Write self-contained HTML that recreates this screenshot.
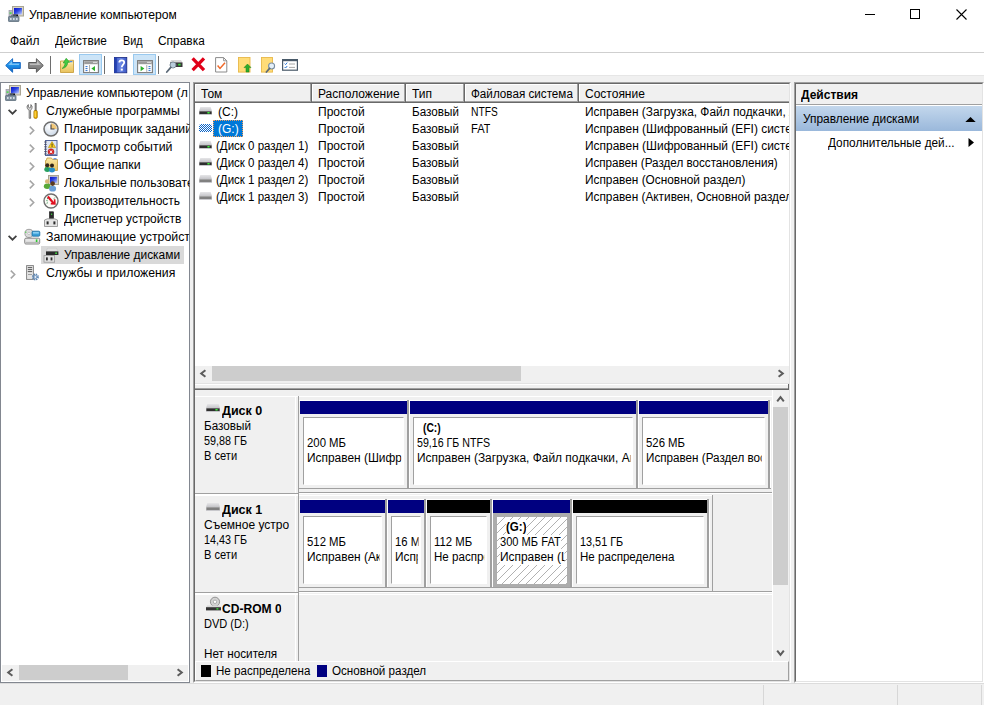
<!DOCTYPE html>
<html><head><meta charset="utf-8"><title>Управление компьютером</title>
<style>
*{box-sizing:border-box;margin:0;padding:0}
html,body{width:984px;height:705px;overflow:hidden;background:#f0f0f0}
body{font-family:"Liberation Sans",sans-serif;font-size:12px;color:#000;position:relative}
.a{position:absolute}
.t{position:absolute;white-space:nowrap;line-height:14px;height:14px;overflow:hidden;transform-origin:0 0}
.b{font-weight:bold}
svg{position:absolute;overflow:visible}
</style></head><body>
<svg width="0" height="0" style="left:0;top:0"><defs>
<linearGradient id="gScr" x1="0" y1="0" x2="1" y2="1"><stop offset="0" stop-color="#0a10c8"/><stop offset="0.45" stop-color="#2a44e0"/><stop offset="1" stop-color="#c8d4ff"/></linearGradient>
<linearGradient id="gBlue" x1="0" y1="0" x2="0" y2="1"><stop offset="0" stop-color="#5bc0ff"/><stop offset="0.5" stop-color="#1b8fe8"/><stop offset="1" stop-color="#0b63c0"/></linearGradient>
<linearGradient id="gGray" x1="0" y1="0" x2="0" y2="1"><stop offset="0" stop-color="#b8b8b8"/><stop offset="0.5" stop-color="#8a8a8a"/><stop offset="1" stop-color="#6e6e6e"/></linearGradient>
<linearGradient id="gHelp" x1="0" y1="0" x2="1" y2="0"><stop offset="0" stop-color="#3350c0"/><stop offset="0.5" stop-color="#6a86e4"/><stop offset="1" stop-color="#3a56c4"/></linearGradient>
<linearGradient id="gDrvTop" x1="0" y1="0" x2="0" y2="1"><stop offset="0" stop-color="#e6e6e8"/><stop offset="1" stop-color="#c2c2c6"/></linearGradient>
<linearGradient id="gFold" x1="0" y1="0" x2="0" y2="1"><stop offset="0" stop-color="#fbe9a8"/><stop offset="1" stop-color="#e9c25c"/></linearGradient>
<radialGradient id="gClock" cx="0.4" cy="0.35" r="0.7"><stop offset="0" stop-color="#ffffff"/><stop offset="1" stop-color="#c9d6e6"/></radialGradient>
<pattern id="hatch" width="8" height="8" patternUnits="userSpaceOnUse"><path d="M-1 1 L1 -1 M-1 9 L9 -1 M7 9 L9 7" stroke="#a8a8a8" stroke-width="0.9" fill="none"/></pattern>
<pattern id="dith" width="2" height="2" patternUnits="userSpaceOnUse"><rect width="2" height="2" fill="#fff"/><rect x="0" y="0" width="1" height="1" fill="#0a64c8"/><rect x="1" y="1" width="1" height="1" fill="#0a64c8"/></pattern>
</defs></svg>
<div class="a" style="left:0px;top:0px;width:984px;height:52px;background:#fff;"></div>
<svg style="left:8px;top:6px" width="16" height="16" viewBox="0 0 16 16"><rect x="4.5" y="0.5" width="11" height="9.5" fill="#d8d4c4" stroke="#a8a494"/>
<rect x="6" y="2" width="8" height="6.5" fill="url(#gScr)"/>
<rect x="1" y="4.5" width="3.5" height="6" fill="#b9b9c4" stroke="#8c8c98" stroke-width="0.6"/>
<rect x="1.6" y="6.4" width="2" height="1.4" fill="#40e040"/>
<path d="M5 8.5 h5 v2 h-5z" fill="#101018"/>
<rect x="0.5" y="10.5" width="10.5" height="5" rx="0.6" fill="#7f909f" stroke="#5e6e7c" stroke-width="0.8"/>
<rect x="2" y="12.2" width="1.6" height="1.6" fill="#e8eef4"/><rect x="5" y="12.2" width="1.6" height="1.6" fill="#e8eef4"/><rect x="8" y="12.2" width="1.6" height="1.6" fill="#e8eef4"/>
<path d="M3.5 10.5 v-1.2 h4.5 v1.2" fill="none" stroke="#5e6e7c" stroke-width="0.9"/></svg>
<div class="t " style="left:29px;top:8px;transform:scaleX(1.0167);">Управление компьютером</div>
<div class="a" style="left:865px;top:14px;width:10px;height:1px;background:#000;"></div>
<div class="a" style="left:910px;top:9px;width:10px;height:10px;background:transparent;border:1px solid #000;"></div>
<svg style="left:956px;top:9px" width="11" height="11"><path d="M0.5 0.5 L10.5 10.5 M10.5 0.5 L0.5 10.5" stroke="#000" stroke-width="1.1"/></svg>
<div class="t " style="left:10px;top:34px;">Файл</div>
<div class="t " style="left:55px;top:34px;transform:scaleX(0.982);">Действие</div>
<div class="t " style="left:122.5px;top:34px;transform:scaleX(0.9075);">Вид</div>
<div class="t " style="left:158px;top:34px;transform:scaleX(0.9934);">Справка</div>
<div class="a" style="left:0px;top:52px;width:984px;height:1px;background:#cfcfcf;"></div>
<div class="a" style="left:0px;top:53px;width:984px;height:22px;background:#fff;"></div>
<div class="a" style="left:0px;top:75px;width:984px;height:1px;background:#e6e6e6;"></div>
<div class="a" style="left:79px;top:54px;width:23px;height:21px;background:#cce4f7;border:1px solid #99c9ef;"></div>
<div class="a" style="left:133px;top:54px;width:23px;height:21px;background:#cce4f7;border:1px solid #99c9ef;"></div>
<div class="a" style="left:50px;top:56px;width:1px;height:18px;background:#6e6e6e;"></div>
<div class="a" style="left:104px;top:56px;width:1px;height:18px;background:#6e6e6e;"></div>
<div class="a" style="left:158px;top:56px;width:1px;height:18px;background:#6e6e6e;"></div>
<svg style="left:5px;top:58px" width="16" height="15" viewBox="0 0 16 15"><path d="M7.6 0.7 L0.7 7.5 L7.6 14.3 V10.5 H15.3 V4.5 H7.6 Z" fill="url(#gBlue)" stroke="#1767c2" stroke-width="1" stroke-linejoin="round"/><path d="M3.2 7 L7 3.6 V5.8 H14 V7 Z" fill="#bfe6ff" opacity="0.55"/></svg>
<svg style="left:28px;top:58px" width="16" height="15" viewBox="0 0 16 15"><path d="M8.4 0.7 L15.3 7.5 L8.4 14.3 V10.5 H0.7 V4.5 H8.4 Z" fill="url(#gGray)" stroke="#5a5a5a" stroke-width="1" stroke-linejoin="round"/><path d="M12.8 7 L9 3.6 V5.8 H2 V7 Z" fill="#e8e8e8" opacity="0.5"/></svg>
<svg style="left:60px;top:58px" width="14" height="15" viewBox="0 0 14 15"><path d="M0.5 3 H9 L9.8 2.3 H13.5 V14.5 H0.5 Z" fill="url(#gFold)" stroke="#c9a040" stroke-width="0.9"/>
<rect x="0.9" y="4.6" width="12.2" height="0.8" fill="#fff4c8" opacity="0.8"/>
<rect x="10" y="3" width="2.4" height="1.2" fill="#4a8ae0"/>
<path d="M2.2 10.4 C4 9.2 5 7.2 5 4.8 L3.2 5 L6.2 0.3 L9.8 4.2 L7.6 4.4 C7.6 7.8 5.4 10 2.2 10.4 Z" fill="#44cc44" stroke="#1e961e" stroke-width="0.6"/></svg>
<svg style="left:83px;top:60px" width="16" height="13" viewBox="0 0 16 13"><rect x="0.6" y="0.6" width="14.8" height="12" fill="#fff" stroke="#7a7a7a" stroke-width="1.1"/>
<rect x="1.2" y="1.2" width="13.6" height="3" fill="#9c9c9c"/>
<rect x="10.4" y="1.8" width="1.2" height="1.2" fill="#fff"/><rect x="12.4" y="1.8" width="1.2" height="1.2" fill="#fff"/><path d="M2.5 6.6 h2 M2.5 8.6 h2 M2.5 10.6 h2" stroke="#2a70d0" stroke-width="1"/>
<rect x="6" y="5" width="0.8" height="7.5" fill="#9a9a9a"/>
<path d="M12 6 L8.4 8.6 L12 11.2 Z" fill="#2cb02c"/></svg>
<svg style="left:114px;top:57px" width="14" height="16" viewBox="0 0 14 16"><rect x="0.4" y="0.4" width="12.4" height="15.4" fill="url(#gHelp)" stroke="#1a2a80" stroke-width="0.8"/>
<rect x="0.4" y="0.4" width="2.4" height="15.4" fill="#2440b0"/>
<path d="M5.3 5.4 C5.3 2.6 10.2 2.6 10.2 5.4 C10.2 7.4 7.8 7.8 7.8 10.2" fill="none" stroke="#fff" stroke-width="1.8"/>
<rect x="6.8" y="11.6" width="2" height="2" fill="#fff"/></svg>
<svg style="left:137px;top:60px" width="16" height="13" viewBox="0 0 16 13"><rect x="0.6" y="0.6" width="14.8" height="12" fill="#fff" stroke="#7a7a7a" stroke-width="1.1"/>
<rect x="1.2" y="1.2" width="13.6" height="3" fill="#9c9c9c"/>
<rect x="10.4" y="1.8" width="1.2" height="1.2" fill="#fff"/><rect x="12.4" y="1.8" width="1.2" height="1.2" fill="#fff"/><path d="M11.5 6.6 h2 M11.5 8.6 h2 M11.5 10.6 h2" stroke="#2a70d0" stroke-width="1"/>
<rect x="9.4" y="5" width="0.8" height="7.5" fill="#9a9a9a"/>
<path d="M3.6 6 L7.4 8.6 L3.6 11.2 Z" fill="#2cb02c"/></svg>
<svg style="left:166px;top:59px" width="17" height="14" viewBox="0 0 17 14"><path d="M5 1 H15 L16.5 3.4 H4 Z" fill="#d8d8d8"/>
<rect x="4" y="3.4" width="12.5" height="4.6" fill="#3a3a3a"/>
<rect x="12.2" y="4.8" width="2.4" height="1.7" fill="#38e038"/>
<circle cx="7" cy="6" r="3" fill="#cfe6f8" fill-opacity="0.85" stroke="#7a8894" stroke-width="1"/>
<path d="M4.8 8.4 L0.8 13" stroke="#5c6a78" stroke-width="1.8" stroke-linecap="round"/></svg>
<svg style="left:191px;top:57px" width="15" height="15" viewBox="0 0 15 15"><path d="M1.6 1.4 L13 13.2 M13 1.4 L1.6 13.2" stroke="#e00018" stroke-width="3.3"/></svg>
<svg style="left:215px;top:57px" width="13" height="16" viewBox="0 0 13 16"><path d="M0.6 0.6 H8.6 L11.8 3.8 V15 H0.6 Z" fill="#fff" stroke="#8a8a8a" stroke-width="1"/>
<path d="M8.6 0.6 V3.8 H11.8" fill="none" stroke="#8a8a8a" stroke-width="0.9"/>
<path d="M2.6 8.6 L5 11.4 L10 5.8" fill="none" stroke="#f06828" stroke-width="1.5"/></svg>
<svg style="left:238px;top:57px" width="14" height="16" viewBox="0 0 14 16"><rect x="0.5" y="0.5" width="11.5" height="14.6" fill="#ffdc78" stroke="#e8b848" stroke-width="0.9"/>
<path d="M9.5 7 L13 10.6 H11 V15 H8 V10.6 H6 Z" fill="#2cac2c" stroke="#1a801a" stroke-width="0.5"/></svg>
<svg style="left:261px;top:57px" width="15" height="16" viewBox="0 0 15 16"><rect x="0.5" y="0.5" width="11" height="14.6" fill="#ffdc78" stroke="#e8b848" stroke-width="0.9"/>
<circle cx="10.6" cy="9" r="3" fill="#e4f0fa" stroke="#7a8ea2" stroke-width="1.1"/>
<path d="M8.6 11.4 L5.4 15" stroke="#5c6a78" stroke-width="1.7" stroke-linecap="round"/></svg>
<svg style="left:282px;top:59px" width="16" height="12" viewBox="0 0 16 12"><rect x="0.6" y="0.6" width="14.8" height="10.6" fill="#fff" stroke="#4a5a6a" stroke-width="1.2"/>
<rect x="0.6" y="0.6" width="14.8" height="1.6" fill="#4a5a6a"/>
<path d="M2.6 4.6 l1 1 l1.6 -2 M2.6 8 l1 1 l1.6 -2" fill="none" stroke="#2a78d8" stroke-width="1"/>
<path d="M7 5 h6 M7 8.4 h6" stroke="#a8a8a8" stroke-width="1"/></svg>
<div class="a" style="left:0px;top:82px;width:190px;height:601px;background:#fff;border:1px solid #828790;"></div>
<svg style="left:5px;top:85px" width="16" height="16" viewBox="0 0 16 16"><rect x="4.5" y="0.5" width="11" height="9.5" fill="#d8d4c4" stroke="#a8a494"/>
<rect x="6" y="2" width="8" height="6.5" fill="url(#gScr)"/>
<rect x="1" y="4.5" width="3.5" height="6" fill="#b9b9c4" stroke="#8c8c98" stroke-width="0.6"/>
<rect x="1.6" y="6.4" width="2" height="1.4" fill="#40e040"/>
<path d="M5 8.5 h5 v2 h-5z" fill="#101018"/>
<rect x="0.5" y="10.5" width="10.5" height="5" rx="0.6" fill="#7f909f" stroke="#5e6e7c" stroke-width="0.8"/>
<rect x="2" y="12.2" width="1.6" height="1.6" fill="#e8eef4"/><rect x="5" y="12.2" width="1.6" height="1.6" fill="#e8eef4"/><rect x="8" y="12.2" width="1.6" height="1.6" fill="#e8eef4"/>
<path d="M3.5 10.5 v-1.2 h4.5 v1.2" fill="none" stroke="#5e6e7c" stroke-width="0.9"/></svg>
<div class="t " style="left:26px;top:86px;width:161.1px;transform:scaleX(1.012);">Управление компьютером (л</div>
<svg style="left:8px;top:109px" width="9" height="6" viewBox="0 0 9 6"><path d="M0.6 0.8 L4.5 4.7 L8.4 0.8" fill="none" stroke="#404040" stroke-width="1.7"/></svg>
<svg style="left:25.5px;top:103px" width="16" height="16" viewBox="0 0 16 16"><path d="M3.2 15.3 V7.2 C1.6 6.6 0.9 5 1.2 3.2 L2.3 1.6 V4 L3.6 4.8 L4.9 4 V1.6 L6 3.2 C6.3 5 5.6 6.6 4.6 7.2 V15.3 Z" fill="#d4d4d4" stroke="#6a6a6a" stroke-width="0.9"/>
<rect x="9" y="0.5" width="1.2" height="7.5" fill="#8a8a8a" stroke="#505050" stroke-width="0.5"/>
<rect x="7.9" y="7.4" width="3.4" height="8" rx="1.3" fill="#f0b400" stroke="#9a6c00" stroke-width="0.7"/>
<rect x="8.7" y="8.4" width="0.9" height="5.6" fill="#ffe070"/></svg>
<div class="t " style="left:45.5px;top:104px;width:140.8px;transform:scaleX(1.0191);">Служебные программы</div>
<svg style="left:29px;top:125.5px" width="6" height="9" viewBox="0 0 6 9"><path d="M0.8 0.6 L4.7 4.5 L0.8 8.4" fill="none" stroke="#a6a6a6" stroke-width="1.6"/></svg>
<svg style="left:43px;top:121px" width="16" height="16" viewBox="0 0 16 16"><circle cx="8" cy="8" r="7" fill="url(#gClock)" stroke="#6e6e6e" stroke-width="1.5"/>
<path d="M8 8 V2.2 A5.8 5.8 0 0 1 13.8 8 Z" fill="#f2c878"/>
<path d="M8 3.5 V8 H11.5" fill="none" stroke="#404048" stroke-width="1.1"/></svg>
<div class="t " style="left:64px;top:122px;width:123.5px;transform:scaleX(1.012);">Планировщик заданий</div>
<svg style="left:29px;top:143.5px" width="6" height="9" viewBox="0 0 6 9"><path d="M0.8 0.6 L4.7 4.5 L0.8 8.4" fill="none" stroke="#a6a6a6" stroke-width="1.6"/></svg>
<svg style="left:43px;top:140px" width="16" height="16" viewBox="0 0 16 16"><rect x="2.5" y="0.5" width="11.5" height="15" fill="#dfe6f4" stroke="#54669c"/>
<path d="M1.2 2 h2.6 M1.2 4.4 h2.6 M1.2 6.8 h2.6 M1.2 9.2 h2.6 M1.2 11.6 h2.6 M1.2 14 h2.6" stroke="#4a4a5a" stroke-width="0.9"/>
<path d="M9 1.6 L12.6 7.6 H5.4 Z" fill="#ffd21c" stroke="#b08800" stroke-width="0.6"/>
<rect x="8.6" y="3.6" width="0.9" height="2.2" fill="#202020"/><rect x="8.6" y="6.2" width="0.9" height="0.8" fill="#202020"/>
<circle cx="8" cy="11.8" r="3" fill="#e02828" stroke="#9c1010" stroke-width="0.5"/>
<path d="M6.7 10.5 L9.3 13.1 M9.3 10.5 L6.7 13.1" stroke="#fff" stroke-width="1"/>
<rect x="4" y="14" width="9.5" height="1" fill="#54669c" opacity="0.7"/></svg>
<div class="t " style="left:64px;top:140px;width:121.4px;transform:scaleX(1.0296);">Просмотр событий</div>
<svg style="left:29px;top:161.5px" width="6" height="9" viewBox="0 0 6 9"><path d="M0.8 0.6 L4.7 4.5 L0.8 8.4" fill="none" stroke="#a6a6a6" stroke-width="1.6"/></svg>
<svg style="left:43px;top:157px" width="16" height="16" viewBox="0 0 16 16"><path d="M2.5 3.5 V13.5 H14.5 V2.5 H9.5 L8.5 1 H4 L3.3 3.5 Z" fill="url(#gFold)" stroke="#c39a3c" stroke-width="0.8"/>
<rect x="10.5" y="1.2" width="3" height="1.2" fill="#4e86d8"/><ellipse cx="4.3" cy="12.569999999999999" rx="3.04" ry="2.4699999999999998" fill="#28a060"/><circle cx="4.3" cy="8.2" r="1.9949999999999999" fill="#3a2a1c"/><ellipse cx="9" cy="12.969999999999999" rx="3.04" ry="2.4699999999999998" fill="#2890c8"/><circle cx="9" cy="8.6" r="1.9949999999999999" fill="#2e2218"/></svg>
<div class="t " style="left:64px;top:158px;width:121.4px;transform:scaleX(1.0294);">Общие папки</div>
<svg style="left:29px;top:179.5px" width="6" height="9" viewBox="0 0 6 9"><path d="M0.8 0.6 L4.7 4.5 L0.8 8.4" fill="none" stroke="#a6a6a6" stroke-width="1.6"/></svg>
<svg style="left:43px;top:175px" width="16" height="16" viewBox="0 0 16 16"><rect x="5.5" y="0.5" width="10" height="9" fill="#d8d4c4" stroke="#a8a494"/>
<rect x="7" y="1.8" width="7.2" height="6.2" fill="url(#gScr)"/><ellipse cx="4.2" cy="11.23" rx="3.3600000000000003" ry="2.7300000000000004" fill="#58a838"/><circle cx="4.2" cy="6.4" r="2.205" fill="#d8b878"/><ellipse cx="9.6" cy="13.66" rx="3.5200000000000005" ry="2.8600000000000003" fill="#6aa0d8"/><circle cx="9.6" cy="8.6" r="2.3100000000000005" fill="#5a3a20"/></svg>
<div class="t " style="left:64px;top:176px;width:123.5px;transform:scaleX(1.012);">Локальные пользователи</div>
<svg style="left:29px;top:197.5px" width="6" height="9" viewBox="0 0 6 9"><path d="M0.8 0.6 L4.7 4.5 L0.8 8.4" fill="none" stroke="#a6a6a6" stroke-width="1.6"/></svg>
<svg style="left:43px;top:193px" width="16" height="16" viewBox="0 0 16 16"><circle cx="8" cy="8" r="7" fill="#fbfbf6" stroke="#6e6e6e" stroke-width="1.4"/>
<path d="M4 5.2 L5 6 M3.4 7.6 L4.6 7.8 M3.6 10.2 L4.8 9.8 M11.8 4.6 L11 5.6" stroke="#2a8a4a" stroke-width="0.9"/>
<path d="M4.8 3.6 L10.6 10.2" stroke="#e01020" stroke-width="2.2"/>
<path d="M11.6 6.2 L11.9 10.8 L7.8 10.6" fill="none" stroke="#e01020" stroke-width="1.6"/></svg>
<div class="t " style="left:64px;top:194px;width:125.5px;transform:scaleX(0.9957);">Производительность</div>
<svg style="left:43px;top:211px" width="16" height="16" viewBox="0 0 16 16"><rect x="6.5" y="0.8" width="4" height="7.2" fill="#2a2a2a" stroke="#101010" stroke-width="0.6"/>
<rect x="8" y="2.6" width="1.2" height="1.2" fill="#40e040"/>
<path d="M1.5 15.5 V9 L4.5 7.8 H11.5 L14.5 9 V15.5 Z" fill="#e4e4e4" stroke="#8a8a8a" stroke-width="0.8"/>
<rect x="3.6" y="10.4" width="2" height="3" fill="#2c2c2c"/><rect x="10.4" y="10.4" width="2" height="3" fill="#2c2c2c"/></svg>
<div class="t " style="left:64px;top:212px;width:125.4px;">Диспетчер устройств</div>
<svg style="left:8px;top:235px" width="9" height="6" viewBox="0 0 9 6"><path d="M0.6 0.8 L4.5 4.7 L8.4 0.8" fill="none" stroke="#404040" stroke-width="1.7"/></svg>
<svg style="left:24px;top:229px" width="16" height="16" viewBox="0 0 16 16"><circle cx="5" cy="4.4" r="4.1" fill="#dcdcdc" stroke="#8e8e8e" stroke-width="0.8"/>
<circle cx="5" cy="4.4" r="1.2" fill="#fff" stroke="#9a9a9a" stroke-width="0.5"/>
<rect x="1.2" y="2.6" width="1.2" height="1.2" fill="#40d040"/>
<rect x="8" y="2.2" width="7.8" height="5" rx="1" fill="#3aa0d8" stroke="#1c6ca0" stroke-width="0.8"/>
<rect x="9" y="3" width="5.8" height="1.6" fill="#8ad0f4"/>
<rect x="0.7" y="9.2" width="15" height="5.8" rx="1.2" fill="#e6e6e6" stroke="#7a7a7a" stroke-width="0.9"/>
<rect x="1.4" y="12.8" width="13.6" height="1.6" fill="#b8b8b8"/>
<rect x="11.8" y="10.4" width="1.6" height="2.6" fill="#30c830"/></svg>
<div class="t " style="left:45.5px;top:230px;width:139.3px;transform:scaleX(1.03);">Запоминающие устройства</div>
<div class="a" style="left:41px;top:246px;width:143px;height:18px;background:#d9d9d9;"></div>
<svg style="left:43px;top:247px" width="16" height="16" viewBox="0 0 16 16"><path d="M4.5 1.2 H13.5 L15 4.4 H3 Z" fill="#e0e0e0" stroke="#c0c0c0" stroke-width="0.5"/>
<rect x="3" y="4.4" width="12.4" height="3.6" fill="#2b2b2b"/>
<rect x="12.2" y="5.5" width="1.8" height="1.4" fill="#40e040"/>
<rect x="1" y="8.6" width="10.6" height="6.6" fill="#e2e2e2" stroke="#9a9a9a" stroke-width="0.8"/>
<rect x="3" y="10.4" width="1.8" height="3" fill="#2c2c2c"/><rect x="7.6" y="10.4" width="1.8" height="3" fill="#2c2c2c"/></svg>
<div class="t " style="left:64px;top:248px;width:125.9px;transform:scaleX(0.9929);">Управление дисками</div>
<svg style="left:10px;top:269.5px" width="6" height="9" viewBox="0 0 6 9"><path d="M0.8 0.6 L4.7 4.5 L0.8 8.4" fill="none" stroke="#a6a6a6" stroke-width="1.6"/></svg>
<svg style="left:24px;top:265px" width="16" height="16" viewBox="0 0 16 16"><rect x="2.6" y="0.6" width="6.8" height="13.8" fill="#e4e4e4" stroke="#7c7c7c" stroke-width="0.9"/>
<path d="M3.8 2.6 h4.4 M3.8 4.6 h4.4 M3.8 6.6 h4.4" stroke="#5a5a5a" stroke-width="1"/>
<rect x="4" y="9" width="4" height="1" fill="#a0a0a0"/>
<circle cx="11.4" cy="12" r="2.6" fill="none" stroke="#5c86b4" stroke-width="1.7" stroke-dasharray="1.3 0.75"/>
<circle cx="11.4" cy="12" r="1.6" fill="#dfe9f4" stroke="#5c86b4" stroke-width="0.9"/></svg>
<div class="t " style="left:45.5px;top:266px;width:140.9px;transform:scaleX(1.0186);">Службы и приложения</div>
<div class="a" style="left:2px;top:665px;width:186px;height:16px;background:#f0f0f0;"></div>
<div class="a" style="left:19px;top:665px;width:109px;height:15px;background:#cdcdcd;"></div>
<svg style="left:6px;top:668px" width="8" height="9" viewBox="0 0 8 9"><path d="M6.4 1.2 L2.2 4.5 L6.4 7.8" fill="none" stroke="#5c5c5c" stroke-width="2"/></svg>
<svg style="left:176px;top:668px" width="8" height="9" viewBox="0 0 8 9"><path d="M1.6 1.2 L5.8 4.5 L1.6 7.8" fill="none" stroke="#5c5c5c" stroke-width="2"/></svg>
<div class="a" style="left:193px;top:82px;width:598px;height:601px;background:#f0f0f0;border:1px solid;border-color:#a0a0a0 #fff #fff #a0a0a0;"></div>
<div class="a" style="left:194px;top:83px;width:596px;height:599px;background:transparent;border:1px solid;border-color:#696969 #e3e3e3 #e3e3e3 #696969;"></div>
<div class="a" style="left:195px;top:84px;width:594px;height:282px;background:#fff;"></div>
<div class="a" style="left:195px;top:84px;width:594px;height:19px;background:#f0f0f0;"></div>
<div class="a" style="left:195px;top:101px;width:594px;height:1px;background:#a0a0a0;"></div>
<div class="a" style="left:195px;top:102px;width:594px;height:1px;background:#696969;"></div>
<div class="a" style="left:195px;top:84px;width:1px;height:17px;background:#fff;"></div>
<div class="a" style="left:195px;top:84px;width:116px;height:1px;background:#fff;"></div>
<div class="a" style="left:310px;top:84px;width:1px;height:18px;background:#a0a0a0;"></div>
<div class="a" style="left:311px;top:84px;width:1px;height:19px;background:#696969;"></div>
<div class="a" style="left:312px;top:84px;width:1px;height:17px;background:#fff;"></div>
<div class="a" style="left:312px;top:84px;width:93px;height:1px;background:#fff;"></div>
<div class="a" style="left:404px;top:84px;width:1px;height:18px;background:#a0a0a0;"></div>
<div class="a" style="left:405px;top:84px;width:1px;height:19px;background:#696969;"></div>
<div class="a" style="left:406px;top:84px;width:1px;height:17px;background:#fff;"></div>
<div class="a" style="left:406px;top:84px;width:58px;height:1px;background:#fff;"></div>
<div class="a" style="left:463px;top:84px;width:1px;height:18px;background:#a0a0a0;"></div>
<div class="a" style="left:464px;top:84px;width:1px;height:19px;background:#696969;"></div>
<div class="a" style="left:465px;top:84px;width:1px;height:17px;background:#fff;"></div>
<div class="a" style="left:465px;top:84px;width:113px;height:1px;background:#fff;"></div>
<div class="a" style="left:577px;top:84px;width:1px;height:18px;background:#a0a0a0;"></div>
<div class="a" style="left:578px;top:84px;width:1px;height:19px;background:#696969;"></div>
<div class="a" style="left:579px;top:84px;width:1px;height:17px;background:#fff;"></div>
<div class="a" style="left:579px;top:84px;width:209px;height:1px;background:#fff;"></div>
<div class="t " style="left:201px;top:87px;">Том</div>
<div class="t " style="left:318px;top:87px;">Расположение</div>
<div class="t " style="left:412px;top:87px;">Тип</div>
<div class="t " style="left:471px;top:87px;transform:scaleX(0.9728);">Файловая система</div>
<div class="t " style="left:585px;top:87px;">Состояние</div>
<svg style="left:198.5px;top:107px" width="13" height="8" viewBox="0 0 13 8"><path d="M1.3 0 H11.7 L13 4.3 H0 Z" fill="url(#gDrvTop)"/>
<rect x="0.3" y="4.3" width="12.4" height="2.9" fill="#2e2e2e"/>
<rect x="0" y="7.2" width="13" height="0.8" fill="#c4c4c8"/><rect x="8.4" y="5" width="2.2" height="1.5" fill="#3cf03c"/></svg>
<div class="t " style="left:218px;top:105px;">(C:)</div>
<div class="t " style="left:318px;top:105px;">Простой</div>
<div class="t " style="left:412px;top:105px;transform:scaleX(0.9746);">Базовый</div>
<div class="t " style="left:471px;top:105px;transform:scaleX(0.8618);">NTFS</div>
<div class="t " style="left:585px;top:105px;width:206.1px;transform:scaleX(0.99);">Исправен (Загрузка, Файл подкачки, Аварийный дамп)</div>
<svg style="left:198.5px;top:124px" width="13" height="8" viewBox="0 0 13 8"><path d="M1 0 H12 L13 2 V8 H0 V2 Z" fill="url(#dith)"/></svg>
<div class="a" style="left:213px;top:120px;width:30px;height:17px;background:#0078d7;border:1px dotted #f0a060;"></div>
<div class="t " style="left:218px;top:122px;color:#fff">(G:)</div>
<div class="t " style="left:318px;top:122px;">Простой</div>
<div class="t " style="left:412px;top:122px;transform:scaleX(0.9746);">Базовый</div>
<div class="t " style="left:471px;top:122px;transform:scaleX(0.9266);">FAT</div>
<div class="t " style="left:585px;top:122px;width:205.0px;transform:scaleX(0.995);">Исправен (Шифрованный (EFI) системный раздел)</div>
<svg style="left:198.5px;top:141px" width="13" height="8" viewBox="0 0 13 8"><path d="M1.3 0 H11.7 L13 4.3 H0 Z" fill="url(#gDrvTop)"/>
<rect x="0.3" y="4.3" width="12.4" height="2.9" fill="#2e2e2e"/>
<rect x="0" y="7.2" width="13" height="0.8" fill="#c4c4c8"/><rect x="8.4" y="5" width="2.2" height="1.5" fill="#3cf03c"/></svg>
<div class="t " style="left:216px;top:139px;transform:scaleX(0.9593);">(Диск 0 раздел 1)</div>
<div class="t " style="left:318px;top:139px;">Простой</div>
<div class="t " style="left:412px;top:139px;transform:scaleX(0.9746);">Базовый</div>
<div class="t " style="left:585px;top:139px;width:205.0px;transform:scaleX(0.995);">Исправен (Шифрованный (EFI) системный раздел)</div>
<svg style="left:198.5px;top:158px" width="13" height="8" viewBox="0 0 13 8"><path d="M1.3 0 H11.7 L13 4.3 H0 Z" fill="url(#gDrvTop)"/>
<rect x="0.3" y="4.3" width="12.4" height="2.9" fill="#2e2e2e"/>
<rect x="0" y="7.2" width="13" height="0.8" fill="#c4c4c8"/><rect x="8.4" y="5" width="2.2" height="1.5" fill="#3cf03c"/></svg>
<div class="t " style="left:216px;top:156px;transform:scaleX(0.9593);">(Диск 0 раздел 4)</div>
<div class="t " style="left:318px;top:156px;">Простой</div>
<div class="t " style="left:412px;top:156px;transform:scaleX(0.9746);">Базовый</div>
<div class="t " style="left:585px;top:156px;width:209.8px;transform:scaleX(0.9722);">Исправен (Раздел восстановления)</div>
<svg style="left:198.5px;top:175px" width="13" height="8" viewBox="0 0 13 8"><path d="M1.3 0 H11.7 L13 4.3 H0 Z" fill="url(#gDrvTop)"/>
<rect x="0.3" y="4.3" width="12.4" height="2.9" fill="#808080"/>
<rect x="0" y="7.2" width="13" height="0.8" fill="#c4c4c8"/></svg>
<div class="t " style="left:216px;top:173px;transform:scaleX(0.9593);">(Диск 1 раздел 2)</div>
<div class="t " style="left:318px;top:173px;">Простой</div>
<div class="t " style="left:412px;top:173px;transform:scaleX(0.9746);">Базовый</div>
<div class="t " style="left:585px;top:173px;width:206.6px;transform:scaleX(0.9875);">Исправен (Основной раздел)</div>
<svg style="left:198.5px;top:192px" width="13" height="8" viewBox="0 0 13 8"><path d="M1.3 0 H11.7 L13 4.3 H0 Z" fill="url(#gDrvTop)"/>
<rect x="0.3" y="4.3" width="12.4" height="2.9" fill="#808080"/>
<rect x="0" y="7.2" width="13" height="0.8" fill="#c4c4c8"/></svg>
<div class="t " style="left:216px;top:190px;transform:scaleX(0.9593);">(Диск 1 раздел 3)</div>
<div class="t " style="left:318px;top:190px;">Простой</div>
<div class="t " style="left:412px;top:190px;transform:scaleX(0.9746);">Базовый</div>
<div class="t " style="left:585px;top:190px;width:207.1px;transform:scaleX(0.985);">Исправен (Активен, Основной раздел)</div>
<div class="a" style="left:195px;top:366px;width:594px;height:17px;background:#f0f0f0;"></div>
<div class="a" style="left:212px;top:366px;width:309px;height:15px;background:#cdcdcd;"></div>
<svg style="left:199px;top:369px" width="8" height="9" viewBox="0 0 8 9"><path d="M6.4 1.2 L2.2 4.5 L6.4 7.8" fill="none" stroke="#5c5c5c" stroke-width="2"/></svg>
<svg style="left:777px;top:369px" width="8" height="9" viewBox="0 0 8 9"><path d="M1.6 1.2 L5.8 4.5 L1.6 7.8" fill="none" stroke="#5c5c5c" stroke-width="2"/></svg>
<div class="a" style="left:195px;top:383px;width:594px;height:1px;background:#e3e3e3;"></div>
<div class="a" style="left:195px;top:384px;width:594px;height:1px;background:#fff;"></div>
<div class="a" style="left:195px;top:388px;width:594px;height:1px;background:#a0a0a0;"></div>
<div class="a" style="left:195px;top:389px;width:594px;height:1px;background:#696969;"></div>
<div class="a" style="left:788px;top:384px;width:1px;height:6px;background:#696969;"></div>
<div class="a" style="left:195px;top:390px;width:577px;height:271px;overflow:hidden">
<div class="a" style="left:0px;top:6px;width:103px;height:1px;background:#fff;"></div>
<div class="a" style="left:100px;top:6px;width:1px;height:98px;background:#fff;"></div>
<div class="a" style="left:103px;top:6px;width:1px;height:99px;background:#a0a0a0;"></div>
<div class="a" style="left:0px;top:103px;width:103px;height:1px;background:#a0a0a0;"></div>
<div class="a" style="left:0px;top:104px;width:103px;height:1px;background:#fff;"></div>
<svg style="left:11px;top:14px" width="14" height="8" viewBox="0 0 14 8"><path d="M1.3 0 H12.7 L14 4.3 H0 Z" fill="url(#gDrvTop)"/>
<rect x="0.3" y="4.3" width="13.4" height="2.9" fill="#2e2e2e"/>
<rect x="0" y="7.2" width="14" height="0.8" fill="#c4c4c8"/><rect x="9.4" y="5" width="2.2" height="1.5" fill="#3cf03c"/></svg>
<div class="t b" style="left:27px;top:14px;transform:scaleX(1.0437);">Диск 0</div>
<div class="t " style="left:9px;top:29px;width:87.2px;transform:scaleX(0.9746);">Базовый</div>
<div class="t " style="left:9px;top:44px;width:94.4px;transform:scaleX(0.9008);">59,88 ГБ</div>
<div class="t " style="left:9px;top:59px;width:91.9px;transform:scaleX(0.9251);">В сети</div>
<div class="a" style="left:104px;top:6px;width:475px;height:1px;background:#fff;"></div>
<div class="a" style="left:104px;top:102px;width:473px;height:1px;background:#a0a0a0;"></div>
<div class="a" style="left:104px;top:103px;width:473px;height:1px;background:#fff;"></div>
<div class="a" style="left:104px;top:10px;width:471px;height:1px;background:#fff;"></div>
<div class="a" style="left:104px;top:98px;width:472px;height:1px;background:#a0a0a0;"></div>
<div class="a" style="left:579px;top:6px;width:1px;height:97px;background:#a0a0a0;"></div>
<div class="a" style="left:105px;top:11px;width:107px;height:13px;background:#000080;"></div>
<div class="a" style="left:212px;top:10px;width:2px;height:89px;background:#a0a0a0;"></div>
<div class="a" style="left:214px;top:11px;width:1px;height:87px;background:#fff;"></div>
<div class="a" style="left:108px;top:27px;width:101px;height:68px;background:#fff;border:1px solid;border-color:#a0a0a0 #fff #fff #a0a0a0;"></div>
<div class="t " style="left:111.5px;top:46px;width:99.9px;transform:scaleX(0.946);">200 МБ</div>
<div class="t " style="left:112.0px;top:61px;width:94.7px;transform:scaleX(0.993);">Исправен (Шифрованный (EFI) системный раздел)</div>
<div class="a" style="left:215px;top:11px;width:226px;height:13px;background:#000080;"></div>
<div class="a" style="left:441px;top:10px;width:2px;height:89px;background:#a0a0a0;"></div>
<div class="a" style="left:443px;top:11px;width:1px;height:87px;background:#fff;"></div>
<div class="a" style="left:218px;top:27px;width:220px;height:68px;background:#fff;border:1px solid;border-color:#a0a0a0 #fff #fff #a0a0a0;"></div>
<div class="t b" style="left:228.0px;top:31px;transform:scaleX(0.857);">(C:)</div>
<div class="t " style="left:221.5px;top:46px;width:241.0px;transform:scaleX(0.8859);">59,16 ГБ NTFS</div>
<div class="t " style="left:222.0px;top:61px;width:214.5px;transform:scaleX(0.993);">Исправен (Загрузка, Файл подкачки, Аварийный дамп, Основной раздел)</div>
<div class="a" style="left:444px;top:11px;width:129px;height:13px;background:#000080;"></div>
<div class="a" style="left:573px;top:10px;width:2px;height:89px;background:#a0a0a0;"></div>
<div class="a" style="left:575px;top:11px;width:1px;height:87px;background:#fff;"></div>
<div class="a" style="left:447px;top:27px;width:123px;height:68px;background:#fff;border:1px solid;border-color:#a0a0a0 #fff #fff #a0a0a0;"></div>
<div class="t " style="left:450.5px;top:46px;width:123.2px;transform:scaleX(0.946);">526 МБ</div>
<div class="t " style="left:451.0px;top:61px;width:119.3px;transform:scaleX(0.9722);">Исправен (Раздел восстановления)</div>
<div class="a" style="left:0px;top:105px;width:103px;height:1px;background:#fff;"></div>
<div class="a" style="left:100px;top:105px;width:1px;height:98px;background:#fff;"></div>
<div class="a" style="left:103px;top:105px;width:1px;height:99px;background:#a0a0a0;"></div>
<div class="a" style="left:0px;top:202px;width:103px;height:1px;background:#a0a0a0;"></div>
<div class="a" style="left:0px;top:203px;width:103px;height:1px;background:#fff;"></div>
<svg style="left:11px;top:113px" width="14" height="8" viewBox="0 0 14 8"><path d="M1.3 0 H12.7 L14 4.3 H0 Z" fill="url(#gDrvTop)"/>
<rect x="0.3" y="4.3" width="13.4" height="2.9" fill="#808080"/>
<rect x="0" y="7.2" width="14" height="0.8" fill="#c4c4c8"/></svg>
<div class="t b" style="left:27px;top:113px;transform:scaleX(1.0437);">Диск 1</div>
<div class="t " style="left:9px;top:128px;width:85.0px;">Съемное устройство</div>
<div class="t " style="left:9px;top:143px;width:94.4px;transform:scaleX(0.9008);">14,43 ГБ</div>
<div class="t " style="left:9px;top:158px;width:91.9px;transform:scaleX(0.9251);">В сети</div>
<div class="a" style="left:104px;top:105px;width:413px;height:1px;background:#fff;"></div>
<div class="a" style="left:104px;top:201px;width:473px;height:1px;background:#a0a0a0;"></div>
<div class="a" style="left:104px;top:202px;width:473px;height:1px;background:#fff;"></div>
<div class="a" style="left:104px;top:109px;width:409px;height:1px;background:#fff;"></div>
<div class="a" style="left:104px;top:197px;width:410px;height:1px;background:#a0a0a0;"></div>
<div class="a" style="left:517px;top:105px;width:1px;height:97px;background:#a0a0a0;"></div>
<div class="a" style="left:105px;top:110px;width:85px;height:13px;background:#000080;"></div>
<div class="a" style="left:190px;top:109px;width:2px;height:89px;background:#a0a0a0;"></div>
<div class="a" style="left:192px;top:110px;width:1px;height:87px;background:#fff;"></div>
<div class="a" style="left:108px;top:126px;width:79px;height:68px;background:#fff;border:1px solid;border-color:#a0a0a0 #fff #fff #a0a0a0;"></div>
<div class="t " style="left:111.5px;top:145px;width:76.6px;transform:scaleX(0.946);">512 МБ</div>
<div class="t " style="left:112.0px;top:160px;width:72.5px;transform:scaleX(0.993);">Исправен (Активен, Основной раздел)</div>
<div class="a" style="left:193px;top:110px;width:36px;height:13px;background:#000080;"></div>
<div class="a" style="left:229px;top:109px;width:2px;height:89px;background:#a0a0a0;"></div>
<div class="a" style="left:231px;top:110px;width:1px;height:87px;background:#fff;"></div>
<div class="a" style="left:196px;top:126px;width:30px;height:68px;background:#fff;border:1px solid;border-color:#a0a0a0 #fff #fff #a0a0a0;"></div>
<div class="t " style="left:199.5px;top:145px;width:25.0px;transform:scaleX(0.9406);">16 МБ</div>
<div class="t " style="left:200.0px;top:160px;width:23.3px;transform:scaleX(0.9875);">Исправен (Основной раздел)</div>
<div class="a" style="left:232px;top:110px;width:63px;height:13px;background:#000;"></div>
<div class="a" style="left:295px;top:109px;width:2px;height:89px;background:#a0a0a0;"></div>
<div class="a" style="left:297px;top:110px;width:1px;height:87px;background:#fff;"></div>
<div class="a" style="left:235px;top:126px;width:57px;height:68px;background:#fff;border:1px solid;border-color:#a0a0a0 #fff #fff #a0a0a0;"></div>
<div class="t " style="left:238.5px;top:145px;width:53.4px;transform:scaleX(0.946);">112 МБ</div>
<div class="t " style="left:239.0px;top:160px;width:51.9px;transform:scaleX(0.9643);">Не распределена</div>
<div class="a" style="left:298px;top:110px;width:77px;height:13px;background:#000080;"></div>
<div class="a" style="left:375px;top:109px;width:2px;height:89px;background:#a0a0a0;"></div>
<div class="a" style="left:377px;top:110px;width:1px;height:87px;background:#fff;"></div>
<div class="a" style="left:298px;top:123px;width:77px;height:74px;background:#fff;border:solid #adadad;border-width:4px 3px 3px 4px;"></div>
<svg style="left:302px;top:127px" width="70" height="67"><rect width="100%" height="100%" fill="url(#hatch)"/></svg>
<div class="t b" style="left:311.0px;top:130px;transform:scaleX(0.9614);background:#fff;height:15px;line-height:15px;">(G:)</div>
<div class="t " style="left:304.5px;top:145px;transform:scaleX(0.9253);background:#fff;height:15px;line-height:15px;">300 МБ FAT</div>
<div class="t " style="left:305.0px;top:160px;width:64.5px;transform:scaleX(0.993);background:#fff;height:15px;line-height:15px;">Исправен (Шифрованный (EFI) системный раздел)</div>
<div class="a" style="left:378px;top:110px;width:134px;height:13px;background:#000;"></div>
<div class="a" style="left:512px;top:109px;width:2px;height:89px;background:#a0a0a0;"></div>
<div class="a" style="left:514px;top:110px;width:1px;height:87px;background:#fff;"></div>
<div class="a" style="left:381px;top:126px;width:128px;height:68px;background:#fff;border:1px solid;border-color:#a0a0a0 #fff #fff #a0a0a0;"></div>
<div class="t " style="left:384.5px;top:145px;width:134.3px;transform:scaleX(0.905);">13,51 ГБ</div>
<div class="t " style="left:385.0px;top:160px;width:125.5px;transform:scaleX(0.9643);">Не распределена</div>
<div class="a" style="left:0px;top:204px;width:103px;height:1px;background:#fff;"></div>
<div class="a" style="left:100px;top:204px;width:1px;height:98px;background:#fff;"></div>
<div class="a" style="left:103px;top:204px;width:1px;height:99px;background:#a0a0a0;"></div>
<div class="a" style="left:0px;top:301px;width:103px;height:1px;background:#a0a0a0;"></div>
<div class="a" style="left:0px;top:302px;width:103px;height:1px;background:#fff;"></div>
<svg style="left:11px;top:207px" width="15" height="14" viewBox="0 0 15 14"><circle cx="9" cy="4.8" r="4.6" fill="#d2d2d2" stroke="#8a8a8a" stroke-width="0.9"/>
<circle cx="9" cy="4.8" r="1.7" fill="#fff" stroke="#8a8a8a" stroke-width="0.6"/>
<path d="M1.2 8.6 H13.8 L15 10.4 H0 Z" fill="#d8d8d8"/>
<rect x="0" y="10.2" width="15" height="3.2" fill="#333"/>
<rect x="10.4" y="11.2" width="2" height="1.3" fill="#38e038"/></svg>
<div class="t b" style="left:27px;top:212px;transform:scaleX(1.0062);">CD-ROM 0</div>
<div class="t " style="left:9px;top:227px;width:92.5px;transform:scaleX(0.9186);">DVD (D:)</div>
<div class="t " style="left:9px;top:257px;width:87.0px;transform:scaleX(0.977);">Нет носителя</div>
<div class="a" style="left:104px;top:204px;width:475px;height:1px;background:#fff;"></div>
<div class="a" style="left:104px;top:300px;width:473px;height:1px;background:#a0a0a0;"></div>
<div class="a" style="left:104px;top:301px;width:473px;height:1px;background:#fff;"></div>
</div>
<div class="a" style="left:772px;top:390px;width:1px;height:271px;background:#fff;"></div>
<div class="a" style="left:773px;top:390px;width:16px;height:271px;background:#f0f0f0;"></div>
<div class="a" style="left:773px;top:407px;width:15px;height:178px;background:#cdcdcd;"></div>
<svg style="left:776px;top:395px" width="9" height="8" viewBox="0 0 9 8"><path d="M1.2 6.4 L4.5 2.2 L7.8 6.4" fill="none" stroke="#5c5c5c" stroke-width="2"/></svg>
<svg style="left:776px;top:649px" width="9" height="8" viewBox="0 0 9 8"><path d="M1.2 1.6 L4.5 5.8 L7.8 1.6" fill="none" stroke="#5c5c5c" stroke-width="2"/></svg>
<div class="a" style="left:195px;top:661px;width:594px;height:20px;background:#f0f0f0;border:1px solid;border-color:#fff #a0a0a0 #a0a0a0 #fff;"></div>
<div class="a" style="left:201px;top:665px;width:10px;height:12px;background:#000;"></div>
<div class="t " style="left:216px;top:664px;transform:scaleX(0.9643);">Не распределена</div>
<div class="a" style="left:317px;top:665px;width:10px;height:12px;background:#000080;"></div>
<div class="t " style="left:332px;top:664px;transform:scaleX(0.97);">Основной раздел</div>
<div class="a" style="left:794px;top:82px;width:190px;height:601px;background:#fff;border:1px solid;border-color:#a0a0a0 #fff #fff #a0a0a0;"></div>
<div class="a" style="left:795px;top:83px;width:188px;height:599px;background:transparent;border:1px solid;border-color:#696969 #e3e3e3 #e3e3e3 #696969;"></div>
<div class="a" style="left:796px;top:84px;width:186px;height:20px;background:#f0f0f0;"></div>
<div class="a" style="left:796px;top:104px;width:186px;height:1px;background:#a0a0a0;"></div>
<div class="t b" style="left:801px;top:88px;">Действия</div>
<div class="a" style="left:796px;top:105px;width:186px;height:1px;background:#fff;"></div>
<div class="a" style="left:796px;top:106px;width:186px;height:25px;background:linear-gradient(#c3d7ec,#9ab8db);"></div>
<div class="t " style="left:803px;top:112px;transform:scaleX(0.9929);">Управление дисками</div>
<svg style="left:965px;top:117px" width="11" height="6"><path d="M0.3 5 L5.5 0 L10.7 5 Z" fill="#000"/></svg>
<div class="t " style="left:827.5px;top:136px;transform:scaleX(0.9832);">Дополнительные дей...</div>
<svg style="left:968px;top:138px" width="7" height="10"><path d="M0.5 0 L6 4.5 L0.5 9 Z" fill="#000"/></svg>
<div class="a" style="left:0px;top:683px;width:984px;height:1px;background:#dcdcdc;"></div>
<div class="a" style="left:763px;top:685px;width:1px;height:20px;background:#d7d7d7;"></div>
<div class="a" style="left:897px;top:685px;width:1px;height:20px;background:#d7d7d7;"></div>
<div class="a" style="left:981px;top:685px;width:1px;height:20px;background:#d7d7d7;"></div>
</body></html>
